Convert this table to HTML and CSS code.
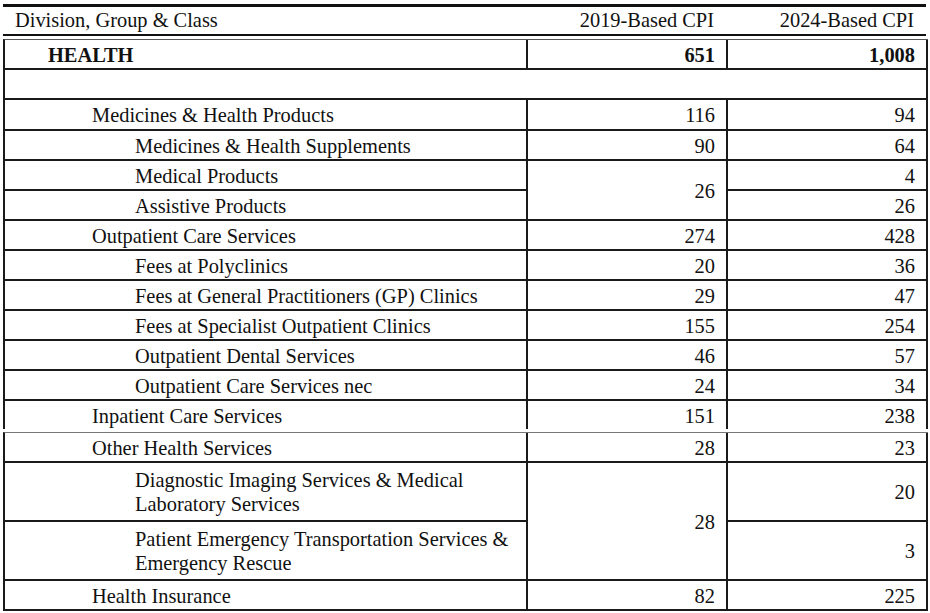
FILE: index.html
```html
<!DOCTYPE html>
<html lang="en">
<head>
<meta charset="utf-8">
<title>Health CPI weights</title>
<link rel="stylesheet" href="styles.css">
</head>
<body>
<div class="page">
  <div class="head">
    <div class="h-label">Division, Group &amp; Class</div>
    <div class="h-num">2019-Based CPI</div>
    <div class="h-num">2024-Based CPI</div>
  </div>
  <table class="grid grid-a">
    <colgroup><col class="c1"><col class="c2"><col class="c3"></colgroup>
    <tr class="r"><td class="lbl l0 b">HEALTH</td><td class="num b">651</td><td class="num b">1,008</td></tr>
    <tr class="r"><td class="blank" colspan="3"></td></tr>
    <tr class="r r31"><td class="lbl l1">Medicines &amp; Health Products</td><td class="num">116</td><td class="num">94</td></tr>
    <tr class="r"><td class="lbl l2">Medicines &amp; Health Supplements</td><td class="num">90</td><td class="num">64</td></tr>
    <tr class="r"><td class="lbl l2">Medical Products</td><td class="num" rowspan="2">26</td><td class="num">4</td></tr>
    <tr class="r"><td class="lbl l2">Assistive Products</td><td class="num">26</td></tr>
    <tr class="r"><td class="lbl l1">Outpatient Care Services</td><td class="num">274</td><td class="num">428</td></tr>
    <tr class="r"><td class="lbl l2">Fees at Polyclinics</td><td class="num">20</td><td class="num">36</td></tr>
    <tr class="r"><td class="lbl l2">Fees at General Practitioners (GP) Clinics</td><td class="num">29</td><td class="num">47</td></tr>
    <tr class="r"><td class="lbl l2">Fees at Specialist Outpatient Clinics</td><td class="num">155</td><td class="num">254</td></tr>
    <tr class="r"><td class="lbl l2">Outpatient Dental Services</td><td class="num">46</td><td class="num">57</td></tr>
    <tr class="r"><td class="lbl l2">Outpatient Care Services nec</td><td class="num">24</td><td class="num">34</td></tr>
    <tr class="r last"><td class="lbl l1">Inpatient Care Services</td><td class="num">151</td><td class="num">238</td></tr>
  </table>
  <table class="grid grid-b">
    <colgroup><col class="c1"><col class="c2"><col class="c3"></colgroup>
    <tr class="r"><td class="lbl l1">Other Health Services</td><td class="num">28</td><td class="num">23</td></tr>
    <tr class="r r59"><td class="lbl l2 wrap">Diagnostic Imaging Services &amp; Medical<br>Laboratory Services</td><td class="num" rowspan="2">28</td><td class="num">20</td></tr>
    <tr class="r r59"><td class="lbl l2 wrap">Patient Emergency Transportation Services &amp;<br>Emergency Rescue</td><td class="num">3</td></tr>
    <tr class="r"><td class="lbl l1">Health Insurance</td><td class="num">82</td><td class="num">225</td></tr>
  </table>
</div>
</body>
</html>
```
FILE: styles.css
```css
html, body {
  margin: 0;
  padding: 0;
  background: #ffffff;
}
body {
  font-family: "Liberation Serif", "Times New Roman", serif;
  font-size: 20.4px;
  color: #111;
}
.page {
  width: 923px;
  margin-left: 3px;
  padding-top: 4px;
}
.head {
  display: grid;
  grid-template-columns: 523px 200px 200px;
  height: 27px;
  border-top: 3px solid #111;
  border-bottom: 2px solid #111;
  align-items: center;
  line-height: 27px;
}
.h-label {
  padding-left: 12px;
}
.h-num {
  text-align: right;
  padding-right: 12px;
}
.grid {
  border-collapse: separate;
  border-spacing: 0;
  table-layout: fixed;
  width: 923px;
  border-left: 2px solid #1a1a1a;
}
.grid-a {
  margin-top: 3px;
  border-top: 1px solid #555;
}
.grid-b {
  margin-top: 3px;
  border-top: 1px solid #777;
}
.c1 { width: 523px; }
.c2 { width: 200px; }
.c3 { width: 200px; }
.grid td {
  box-sizing: border-box;
  padding: 1px 0 0 0;
  border-right: 2px solid #1a1a1a;
  border-bottom: 2px solid #1a1a1a;
  vertical-align: middle;
  white-space: nowrap;
  line-height: 24px;
}
.r td { height: 30px; }
.grid .r31 td { height: 31px; }
.grid .r59 td { height: 59px; }
.grid-a .last td {
  height: 28px;
  border-bottom: none;
}
.grid td.lbl { text-align: left; }
.grid td.l0 { padding-left: 43px; }
.grid td.l1 { padding-left: 87px; }
.grid td.l2 { padding-left: 130px; }
.grid td.wrap { white-space: normal; }
.grid td.num {
  text-align: right;
  padding-right: 11px;
}
.b { font-weight: bold; }
```
